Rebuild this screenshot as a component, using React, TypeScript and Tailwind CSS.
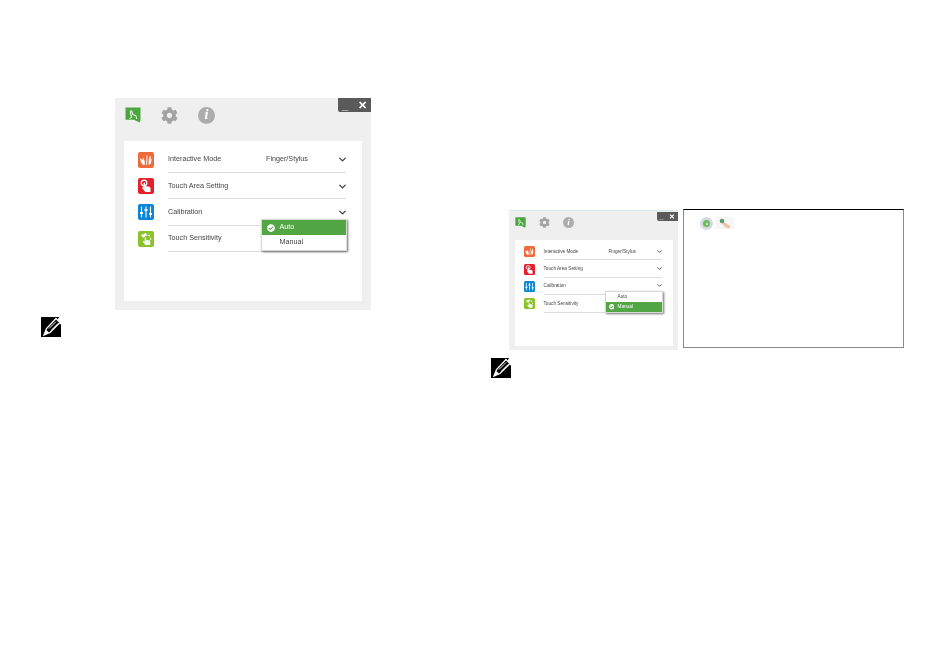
import { ChevronDown } from 'lucide-react';
import { FaCheckCircle, FaCog } from 'react-icons/fa';

const rows = ['Interactive Mode', 'Touch Area Setting', 'Calibration', 'Touch Sensitivity'];

const large = {
  window: 'w-[256px] h-[212px] pt-[9px]',
  close: 'w-[33px] h-[14px] text-[11px] gap-[10px]',
  tabs: 'h-[16px] pl-[10px] gap-[20px]',
  tabHand: 'w-[16px] h-[16px]',
  gear: 'w-[17px] h-[17px]',
  info: 'w-[17px] h-[17px] text-[14px]',
  panel: 'mx-[9px] mt-[18px] h-[160px] pt-[5.75px] pl-[14px] pr-[16px]',
  row: 'h-[26.25px] gap-[14px]',
  rowText: 'pt-[1px]',
  icon: 'w-[16px] h-[16px] rounded-[2px]',
  label: 'w-[98px] text-[7.2px]',
  value: 'text-[7.2px]',
  chevron: 'w-[11px] h-[11px] mr-[-2px]',
  menu: 'left-[136.5px] top-[78px] w-[86px] text-[7.2px]',
  menuRow: 'h-[15px] pl-[18px]',
  check: 'w-[8px] h-[8px] left-[5px] top-[3.5px]',
};

const small = {
  window: 'w-[169px] h-[139px] pt-[6px]',
  close: 'w-[21px] h-[9px] text-[7px] gap-[6px] mt-[1px]',
  tabs: 'h-[11px] pl-[6px] gap-[13px]',
  tabHand: 'w-[11px] h-[11px]',
  gear: 'w-[11px] h-[11px]',
  info: 'w-[11px] h-[11px] text-[9px]',
  panel: 'mx-[5.5px] mt-[11.5px] h-[106.5px] pt-[3.5px] pl-[9px] pr-[11px]',
  row: 'h-[17.4px] gap-[9px]',
  rowText: 'pt-0',
  icon: 'w-[11px] h-[11px] rounded-[1.5px]',
  label: 'w-[65px] text-[4.7px]',
  value: 'text-[4.7px]',
  chevron: 'w-[7px] h-[7px] mr-[-1px]',
  menu: 'left-[90px] top-[51.5px] w-[58px] text-[4.7px]',
  menuRow: 'h-[10px] pl-[12px]',
  check: 'w-[5.5px] h-[5.5px] left-[3px] top-[2.25px]',
};

function RowIcon({ index, className }: { index: number; className: string }) {
  const bg = ['bg-[#ee6b3b]', 'bg-[#e61f2d]', 'bg-[#0b85d6]', 'bg-[#8cc22c]'][index];
  return (
    <div className={`${className} ${bg} shrink-0 overflow-hidden`}>
      <svg viewBox="0 0 16 16" className="w-full h-full" fill="white">
        {index === 0 && (
          <>
            <path d="M2 6l2.500 2L5 5.500l1.500 3 .5 4-2 .5L2.800 10z" />
            <path d="M8.600 3.500l.9 0-.4 9.500-.9 0z" />
            <path d="M10.500 12.500l.3-5 1-3.500 1 .3-.2 3 1-.5-.5 4-1 1.700z" />
          </>
        )}
        {index === 1 && (
          <>
            <circle cx="6" cy="5" r="2.800" fill="none" stroke="white" strokeWidth="1.300" />
            <path d="M5.500 5.200c0-1 1.500-1 1.500 0v2.700l4.200.9c1 .2 1.300.8 1.300 1.600V14H7.300L4.400 10.400c-.5-.8.4-1.500 1.100-.9z" />
          </>
        )}
        {index === 2 && (
          <g stroke="white" strokeWidth="1.100">
            <path d="M3.500 2.500v11M8 2.500v11M12.500 2.500v11" />
            <path d="M2 9h3M6.500 6h3M11 10h3" strokeWidth="2" />
          </g>
        )}
        {index === 3 && (
          <>
            <path d="M7 2l1.300.4.300 1.300 1.300.4 1-.7 1.200 1.100-.7 1.100.5 1.200 1.300.3v1.700l-1.300.3-.5 1.200H10a3 3 0 1 0-3.500-4L5 6.500 3 4.300 4.700 3l1 .6z" />
            <path d="M6.800 6.800c.6-.6 1.300-.2 1.300.4v1.600l3 .6c.8.200 1.100.7 1.100 1.300V14H7.500L5 11c-.6-.8.300-1.400 1-.8l.800.6z" />
          </>
        )}
      </svg>
    </div>
  );
}

function SettingsWindow({ size, selected }: { size: typeof large; selected: 'Auto' | 'Manual' }) {
  return (
    <div className={`${size.window} relative bg-[#efefef] blur-[0.35px]`}>
      {/* minimize / close */}
      <div className={`${size.close} absolute right-0 top-0 flex items-center justify-center bg-[#5a5a5a] rounded-bl-[2px] text-white font-bold font-['Liberation_Sans',sans-serif]`}>
        <span className="leading-none">_</span>
        <span className="leading-none">✕</span>
      </div>

      <div className={`${size.tabs} flex items-center`}>
        <svg viewBox="0 0 16 16" className={size.tabHand}>
          <path d="M0.500 0.500H15.500V13.500L14.500 15.500L9 12.800H0.500Z" fill="#4ca63f" />
          <path d="M4.500 11.500l2-1-1.200-6c0-1.200 1.500-1.200 1.700 0l.7 3.200 3.200.8.800 3.500" fill="none" stroke="white" strokeWidth="1" />
        </svg>
        <FaCog className={`${size.gear} text-[#a3a3a3]`} />
        <div className={`${size.info} rounded-full bg-[#acacac] flex items-center justify-center text-white italic font-bold leading-none font-['Liberation_Serif',serif]`}>
          i
        </div>
      </div>

      <div className={`${size.panel} relative bg-white`}>
        {rows.map((label, i) => (
          <div key={label} className={`${size.row} flex items-center`}>
            <RowIcon index={i} className={size.icon} />
            <div className={`${size.rowText} flex-1 min-w-0 h-full flex items-center border-b border-[#dcdcdc] text-[#444444] font-['Liberation_Sans',sans-serif]`}>
              <span className={`${size.label} shrink-0`}>{label}</span>
              {i === 0 && <span className={size.value}>Finger/Stylus</span>}
              {i < 3 && <ChevronDown className={`${size.chevron} ml-auto text-[#444444]`} strokeWidth={3} />}
            </div>
          </div>
        ))}

        {/* open dropdown */}
        <div className={`${size.menu} absolute z-10 bg-white border border-[#d8d8d8] shadow-[1px_1px_2px_rgba(0,0,0,0.55)] font-['Liberation_Sans',sans-serif]`}>
          {(['Auto', 'Manual'] as const).map((opt) => (
            <div
              key={opt}
              className={`${size.menuRow} relative flex items-center ${opt === selected ? 'bg-[#52a643] text-white' : 'text-[#444444]'}`}
            >
              {opt === selected && <FaCheckCircle className={`${size.check} absolute text-white`} />}
              {opt}
            </div>
          ))}
        </div>
      </div>
    </div>
  );
}

function NoteIcon() {
  return (
    <svg viewBox="0 0 20 20" className="w-[20px] h-[20px] block">
      <rect width="20" height="20" fill="black" />
      <path d="M20 0V8L16.500 3L18 0Z" fill="white" />
      <path d="M3 18L5.500 11.500L15 1.500L19 5.500L9 15.500Z" fill="none" stroke="white" strokeWidth="1.300" />
      <path d="M3 18L5.500 13L8 15.500Z" fill="white" />
      <path d="M8 11.500L15 4.500M10.500 13L17 6.500" stroke="white" strokeWidth=".9" />
    </svg>
  );
}

export default function App() {
  return (
    <div className="w-[950px] h-[663px] bg-white flex overflow-hidden">
      <section className="w-[491px] shrink-0 pl-[41px] pt-[98px]">
        <div className="ml-[74px]">
          <SettingsWindow size={large} selected="Auto" />
        </div>
        <div className="mt-[7px]">
          <NoteIcon />
        </div>
      </section>

      <section className="pt-[209px]">
        <div className="flex items-start">
          <div className="ml-[18px] mt-[1px] border-t border-[#d4e9f2]">
            <SettingsWindow size={small} selected="Manual" />
          </div>
          <div className="ml-[5px] w-[221px] h-[139px] border border-[#8a8a8a] border-t-black bg-white pt-[7px] pl-[16px] flex items-start gap-[2px]">
            <div className="w-[13px] h-[13px] rounded-full bg-[#d5dbe3] flex items-center justify-center blur-[0.35px]">
              <div className="w-[7px] h-[7px] rounded-full bg-[#6fbb5d] flex items-center justify-center">
                <div className="w-[2px] h-[2px] rounded-full bg-[#e4f3df]" />
              </div>
            </div>
            <svg viewBox="0 0 19 12" className="w-[19px] h-[12px] bg-[#f6f6f6] blur-[0.35px]">
              <path d="M8 4.500L13 7.500C15 8.500 16 10 14.500 11C12.500 11.800 10.500 10.500 9 9L6.500 6Z" fill="#eec4a4" />
              <circle cx="7" cy="4" r="2.300" fill="#5e9a72" />
            </svg>
          </div>
        </div>
        <div className="mt-[8px]">
          <NoteIcon />
        </div>
      </section>
    </div>
  );
}
